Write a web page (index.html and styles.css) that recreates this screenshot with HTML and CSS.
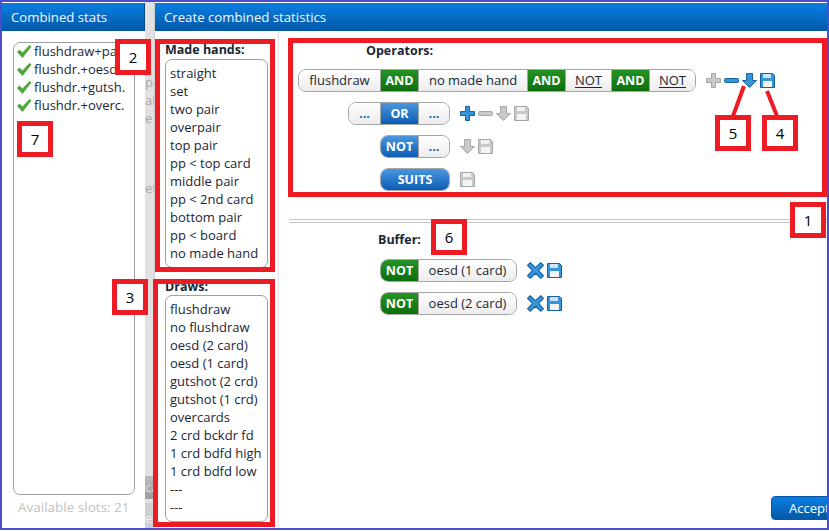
FILE: index.html
```html
<!DOCTYPE html>
<html lang="en">
<head>
<meta charset="utf-8">
<title>Combined statistics</title>
<link rel="stylesheet" href="styles.css">
</head>
<body>
<svg class="sprite" width="0" height="0" aria-hidden="true">
  <symbol id="i-plus" viewBox="0 0 15 15"><path d="M5.5.5h4v5h5v4h-5v5h-4v-5h-5v-4h5z"/></symbol>
  <symbol id="i-minus" viewBox="0 0 15 15"><rect x=".5" y="5.5" width="14" height="4" rx="1"/></symbol>
  <symbol id="i-down" viewBox="0 0 15 15"><path d="M4.5.5h6v7h4l-7 7-7-7h4z"/></symbol>
  <symbol id="i-save" viewBox="0 0 15 15"><path d="M.5.5h12l2 2v12H.5z"/><rect x="3" y="1" width="8" height="4" fill="#fff" stroke="none" opacity=".75"/><rect x="3" y="8" width="9" height="6" fill="#f2f4f6" stroke="none"/></symbol>
  <symbol id="i-x" viewBox="0 0 16 16"><path d="M3 .7 8 5.2 13 .7 15.5 3 11 8l4.500 5L13 15.300 8 10.800 3 15.300.5 13 5 8 .5 3z"/></symbol>
  <symbol id="i-check" viewBox="0 0 16 15"><path d="M1 8l2.500-2.500 3 3L13.500 1 15.500 2.500 6.500 14z"/></symbol>
</svg>

<div class="frame">
  <aside class="stats">
    <header class="title title-left">Combined stats</header>
    <div class="stats-body">
      <ul class="slot-list">
        <li class="slot"><svg class="check"><use href="#i-check"/></svg>flushdraw+pair</li>
        <li class="slot"><svg class="check"><use href="#i-check"/></svg>flushdr.+oesd</li>
        <li class="slot"><svg class="check"><use href="#i-check"/></svg>flushdr.+gutsh.</li>
        <li class="slot"><svg class="check"><use href="#i-check"/></svg>flushdr.+overc.</li>
      </ul>
      <p class="slots-left">Available slots: 21</p>
    </div>
  </aside>

  <div class="gap">
    <span class="ghost ghost-first">pa</span>
    <span class="ghost">air</span>
    <span class="ghost">e</span>
    <span class="ghost ghost-et">et</span>
    <span class="ghost-handle">ca</span>
    <span class="ghost-tail">e</span>
  </div>

  <section class="dialog">
    <header class="title">Create combined statistics</header>
    <div class="dialog-body">
      <div class="lists">
        <h3 class="list-label">Made hands:</h3>
        <ul class="pick-list">
          <li>straight</li><li>set</li><li>two pair</li><li>overpair</li><li>top pair</li><li>pp &lt; top card</li><li>middle pair</li><li>pp &lt; 2nd card</li><li>bottom pair</li><li>pp &lt; board</li><li>no made hand</li>
        </ul>
        <h3 class="list-label list-label-draws">Draws:</h3>
        <ul class="pick-list">
          <li>flushdraw</li><li>no flushdraw</li><li>oesd (2 card)</li><li>oesd (1 card)</li><li>gutshot (2 crd)</li><li>gutshot (1 crd)</li><li>overcards</li><li>2 crd bckdr fd</li><li>1 crd bdfd high</li><li>1 crd bdfd low</li><li>---</li><li>---</li>
        </ul>
      </div>

      <div class="main">
        <h3 class="section-label ops-label">Operators:</h3>
        <div class="rows">
          <div class="row row-a">
            <div class="group">
              <span class="seg w-flush">flushdraw</span>
              <span class="seg w-op green">AND</span>
              <span class="seg w-nomade">no made hand</span>
              <span class="seg w-op green">AND</span>
              <span class="seg w-not link">NOT</span>
              <span class="seg w-op green">AND</span>
              <span class="seg w-fill link">NOT</span>
            </div>
            <div class="tools">
              <svg class="ic gray"><use href="#i-plus"/></svg>
              <svg class="ic blue"><use href="#i-minus"/></svg>
              <svg class="ic blue"><use href="#i-down"/></svg>
              <svg class="ic blue"><use href="#i-save"/></svg>
            </div>
          </div>
          <div class="row row-b">
            <div class="group">
              <span class="seg w-dots dots">...</span>
              <span class="seg w-op blue-seg">OR</span>
              <span class="seg w-fill dots">...</span>
            </div>
            <div class="tools">
              <svg class="ic blue"><use href="#i-plus"/></svg>
              <svg class="ic gray"><use href="#i-minus"/></svg>
              <svg class="ic gray"><use href="#i-down"/></svg>
              <svg class="ic gray"><use href="#i-save"/></svg>
            </div>
          </div>
          <div class="row row-c">
            <div class="group">
              <span class="seg w-op-first blue-seg">NOT</span>
              <span class="seg w-fill dots">...</span>
            </div>
            <div class="tools">
              <svg class="ic gray"><use href="#i-down"/></svg>
              <svg class="ic gray"><use href="#i-save"/></svg>
            </div>
          </div>
          <div class="row row-c">
            <div class="group">
              <span class="seg w-fill blue-seg">SUITS</span>
            </div>
            <div class="tools">
              <svg class="ic gray"><use href="#i-save"/></svg>
            </div>
          </div>
        </div>

        <div class="splitter"></div>

        <h3 class="section-label buffer-label">Buffer:</h3>
        <div class="rows">
          <div class="row row-c">
            <div class="group">
              <span class="seg w-op-first green">NOT</span>
              <span class="seg w-fill">oesd (1 card)</span>
            </div>
            <div class="tools">
              <svg class="ic blue ic-x"><use href="#i-x"/></svg>
              <svg class="ic blue"><use href="#i-save"/></svg>
            </div>
          </div>
          <div class="row row-c">
            <div class="group">
              <span class="seg w-op-first green">NOT</span>
              <span class="seg w-fill">oesd (2 card)</span>
            </div>
            <div class="tools">
              <svg class="ic blue ic-x"><use href="#i-x"/></svg>
              <svg class="ic blue"><use href="#i-save"/></svg>
            </div>
          </div>
        </div>

        <div class="footer"><button class="accept">Accept</button></div>
      </div>
    </div>
  </section>
</div>

<div class="marks">
  <div class="outline o-ops"></div>
  <div class="outline o-made"></div>
  <div class="outline o-draws"></div>
  <svg class="leaders" width="829" height="531"><path d="M744 86 733 116M767 91l10 25"/></svg>
  <div class="mark m1">1</div>
  <div class="mark m2">2</div>
  <div class="mark m3">3</div>
  <div class="mark m4">4</div>
  <div class="mark m5">5</div>
  <div class="mark m6">6</div>
  <div class="mark m7">7</div>
</div>
</body>
</html>
```

FILE: styles.css
```css
* { box-sizing: border-box; }
html, body { margin: 0; padding: 0; }
body {
  position: relative;
  width: 829px;
  height: 531px;
  overflow: hidden;
  background: #fff;
  font-family: "Open Sans", "Noto Sans", sans-serif;
  font-size: 13px;
  color: #1b2735;
}
.sprite { position: absolute; }
ul { list-style: none; margin: 0; padding: 0; }
h3, p { margin: 0; }

.frame {
  width: 829px;
  height: 530px;
  border: 2px solid #4a4fd2;
  display: flex;
  overflow: hidden;
  background: #fff;
}

.title {
  height: 28px;
  margin-top: 1px;
  padding-left: 9px;
  flex: none;
  display: flex;
  align-items: center;
  color: #f2f8ff;
  font-size: 13.2px;
  background: linear-gradient(#0b7fe3, #0358a6);
}
.title-left { border-right: 1px solid #03488c; }

/* left panel */
.stats { width: 143px; flex: none; display: flex; flex-direction: column; }
.stats-body { flex: 1; padding: 11px 10px 0 11px; display: flex; flex-direction: column; }
.slot-list {
  height: 453px;
  border: 1px solid #a0a0a0;
  border-radius: 7px;
  overflow: hidden;
}
.slot { height: 18px; padding: 0 0 2px 2px; display: flex; align-items: center; white-space: nowrap; }
.check { width: 16px; height: 15px; flex: none; margin-right: 2px; fill: #4ea83a; }
.slots-left { margin-top: 3px; padding-left: 5px; color: #c2c2c2; font-size: 13.5px; line-height: 18px; white-space: nowrap; }

/* gap with the window behind */
.gap {
  width: 10px;
  flex: none;
  display: flex;
  flex-direction: column;
  overflow: hidden;
  background: #e1e1e1;
  color: #a8a8a8;
  border-right: 1px solid #cfcfcf;
}
.ghost { height: 18px; line-height: 18px; white-space: nowrap; }
.ghost-first { margin-top: 71px; }
.ghost-et { margin-top: 52px; }
.ghost-handle {
  margin-top: 279px;
  height: 23px;
  line-height: 23px;
  color: #dcdcdc;
  background: linear-gradient(#bdbdbd, #9c9c9c);
}
.ghost-tail { margin-top: 4px; flex: 1; color: #eee; background: #cfcfcf; line-height: 30px; }

/* dialog */
.dialog { flex: 1; min-width: 0; display: flex; flex-direction: column; }
.dialog-body { flex: 1; min-height: 0; display: flex; }

.lists { width: 124px; flex: none; padding: 10px 0 0 10px; border-right: 1px solid #e3e3e3; }
.list-label { font-size: 12.5px; font-weight: 700; line-height: 18px; }
.list-label-draws { margin-top: 11px; line-height: 16px; }
.pick-list {
  width: 103px;
  border: 1px solid #a0a0a0;
  border-radius: 7px;
  padding: 4px 0 5px 4px;
}
.pick-list li { height: 18px; line-height: 18px; white-space: nowrap; }

.main { flex: 1; min-width: 0; display: flex; flex-direction: column; overflow: hidden; }
.section-label { font-size: 12.5px; font-weight: 700; line-height: 18px; }
.ops-label { margin: 11px 0 0 87px; }
.buffer-label { margin: 8px 0 0 99px; }
.rows { display: flex; flex-direction: column; gap: 10px; margin-top: 9px; }
.buffer-label + .rows { margin-top: 10px; }
.row { display: flex; height: 23px; }
.row-a { padding-left: 19px; }
.row-b { padding-left: 69px; }
.row-c { padding-left: 101px; }

.group {
  display: flex;
  height: 23px;
  border: 1px solid #a6a6a6;
  border-radius: 8px;
  overflow: hidden;
}
.row-a .group { width: 398px; }
.row-b .group { width: 102px; }
.row-c .group { width: 70px; }
.buffer-label + .rows .group { width: 137px; }

.seg {
  display: flex;
  align-items: center;
  justify-content: center;
  padding-bottom: 2px;
  white-space: nowrap;
  background: linear-gradient(#fff, #ececec);
  border-left: 1px solid #a6a6a6;
}
.seg:first-child { border-left: 0; }
.w-flush { width: 81px; }
.w-op { width: 38px; }
.w-op-first { width: 37px; }
.w-nomade { width: 109px; }
.w-not { width: 46px; }
.w-dots { width: 31px; }
.w-fill { flex: 1; }
.green { padding-bottom: 0; color: #fff; font-weight: 700; font-size: 12.5px; background: linear-gradient(#259325, #0d6f0d); }
.blue-seg { padding-bottom: 0; color: #fff; font-weight: 700; font-size: 12.5px; background: linear-gradient(#4a97df, #0b5db3); }
.link { text-decoration: underline; text-underline-offset: 2px; }
.dots { color: #1666b8; font-weight: 700; }

.tools { display: flex; align-items: center; gap: 3px; margin-left: 10px; }
.ic { width: 15px; height: 15px; flex: none; stroke-width: 1; }
.ic-x { width: 17px; height: 17px; }
.gray { fill: #c9c9c9; stroke: #a6a6a6; }
.blue { fill: #3694d8; stroke: #16629f; }

.splitter {
  flex: none;
  height: 4px;
  margin: 28px 0 0 10px;
  border-top: 1px solid #c8c8c8;
  border-bottom: 1px solid #c8c8c8;
}

.footer { margin-top: auto; padding: 0 0 8px 492px; display: flex; }
.accept {
  flex: none;
  width: 80px;
  height: 24px;
  padding: 0 0 0 17px;
  text-align: left;
  border: 1px solid #0b58a8;
  border-radius: 4px;
  color: #fff;
  font: 13px "Open Sans", "Noto Sans", sans-serif;
  background: linear-gradient(#0b7fe3, #0358a6);
}

/* red annotations drawn over the screenshot */
.marks { position: absolute; inset: 0; pointer-events: none; }
.outline { position: absolute; border: 5px solid #ed1c24; }
.o-ops { left: 288px; top: 38px; width: 539px; height: 159px; }
.o-made { left: 155px; top: 39px; width: 120px; height: 233px; }
.o-draws { left: 153px; top: 279px; width: 122px; height: 248px; }
.leaders { position: absolute; left: 0; top: 0; fill: none; stroke: #ed1c24; stroke-width: 4; }
.mark {
  position: absolute;
  width: 36px;
  height: 36px;
  border: 5px solid #ed1c24;
  background: #fff;
  color: #000;
  font: 15px/26px "Open Sans", sans-serif;
  text-align: center;
}
.m1 { left: 790px; top: 202px; }
.m2 { left: 115px; top: 39px; }
.m3 { left: 112px; top: 279px; }
.m4 { left: 762px; top: 115px; }
.m5 { left: 715px; top: 115px; }
.m6 { left: 431px; top: 219px; }
.m7 { left: 17px; top: 121px; }
```
